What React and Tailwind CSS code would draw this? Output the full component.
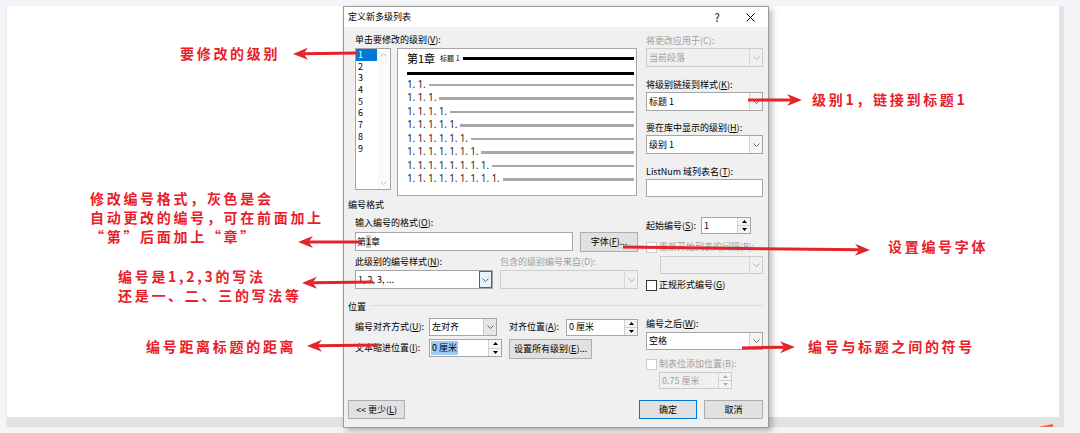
import React from 'react';

const UI = "[font-family:'Noto_Sans_CJK_SC','Noto_Sans',sans-serif]";
const LBL = 'h-[14px] leading-[14px] whitespace-nowrap';
const ANN =
  "absolute [font-family:'Noto_Sans_CJK_SC',sans-serif] text-[14px] font-bold text-[#e8202a] tracking-[2.7px] leading-[19px] whitespace-nowrap";

function Chevron({ color = '#6b6b6b', up = false }) {
  return (
    <svg width="7" height="4" viewBox="0 0 7 4">
      <polyline
        points={up ? '0.5,3.5 3.5,0.5 6.5,3.5' : '0.5,0.5 3.5,3.5 6.5,0.5'}
        fill="none"
        stroke={color}
        strokeWidth="1"
      />
    </svg>
  );
}

function Tri({ up, color = '#000' }) {
  return (
    <svg width="5" height="3" viewBox="0 0 5 3">
      <polygon points={up ? '0,3 2.5,0 5,3' : '0,0 5,0 2.5,3'} fill={color} />
    </svg>
  );
}

function Combo({ cls = '', text, disabled, focus, gray }) {
  return (
    <div
      className={`flex border ${
        disabled ? 'border-[#cccccc] bg-[#f0f0f0] text-[#a0a0a0]' : 'border-[#a6a6a6] bg-white'
      } ${cls}`}
    >
      <div className="flex-1 flex items-center pl-[2px] whitespace-nowrap overflow-hidden">{text}</div>
      <div
        className={`w-[13px] flex items-center justify-center ${
          focus
            ? 'border border-[#0078d7] bg-[#e5f1fb]'
            : gray
            ? 'border-l border-[#c8c8c8] bg-[#e6e6e6]'
            : disabled
            ? 'border-l border-[#d6d6d6]'
            : 'border-l border-[#d4d4d4] bg-[#f4f4f4]'
        }`}
      >
        <Chevron color={disabled ? '#b0b0b0' : '#6b6b6b'} />
      </div>
    </div>
  );
}

function Spin({ cls = '', text, disabled, selected }) {
  return (
    <div
      className={`flex border ${
        disabled ? 'border-[#cccccc] bg-[#f0f0f0] text-[#a0a0a0]' : 'border-[#a6a6a6] bg-white'
      } ${cls}`}
    >
      <div className="flex-1 flex items-center pl-[1px] whitespace-nowrap">
        {selected ? <span className="bg-[#9ccaf0] px-[1px]">{text}</span> : <span className="pl-[1px]">{text}</span>}
      </div>
      <div className="w-[13px] flex flex-col border-l border-[#d0d0d0]">
        <div className="flex-1 flex items-center justify-center border-b border-[#d0d0d0] bg-[#f4f4f4]">
          <Tri up color={disabled ? '#b0b0b0' : '#000'} />
        </div>
        <div className="flex-1 flex items-center justify-center bg-[#f4f4f4]">
          <Tri color={disabled ? '#b0b0b0' : '#000'} />
        </div>
      </div>
    </div>
  );
}

function Check({ cls = '', label, disabled }) {
  return (
    <div className={`flex items-center h-[12px] ${cls}`}>
      <div className={`w-[11px] h-[11px] border bg-white ${disabled ? 'border-[#cccccc]' : 'border-[#333333]'}`} />
      <span className={`ml-[2px] whitespace-nowrap ${disabled ? 'text-[#a0a0a0]' : ''}`}>{label}</span>
    </div>
  );
}

function Btn({ cls = '', children, primary }) {
  return (
    <div
      className={`flex items-center justify-center whitespace-nowrap bg-[#e1e1e1] border ${
        primary ? 'border-[#0078d7]' : 'border-[#adadad]'
      } ${cls}`}
    >
      {children}
    </div>
  );
}

function Arrow({ x1, y1, x2, y2 }) {
  const dx = x2 - x1;
  const dy = y2 - y1;
  const L = Math.hypot(dx, dy);
  const ux = dx / L;
  const uy = dy / L;
  const px = -uy;
  const py = ux;
  const len = 15;
  const hw = 6;
  const notch = 10.5;
  const bx = x2 - ux * len;
  const by = y2 - uy * len;
  const nx = x2 - ux * notch;
  const ny = y2 - uy * notch;
  const pts = `${x2},${y2} ${bx + px * hw},${by + py * hw} ${nx},${ny} ${bx - px * hw},${by - py * hw}`;
  return (
    <g>
      <line x1={x1} y1={y1} x2={nx} y2={ny} stroke="#e3242b" strokeWidth="3" />
      <polygon points={pts} fill="#e3242b" />
    </g>
  );
}

const levels = [1, 2, 3, 4, 5, 6, 7, 8, 9];
const rows = [2, 3, 4, 5, 6, 7, 8, 9].map((k) => Array(k).fill('1.').join(' '));

function ListBox() {
  return (
    <div className="w-[36px] h-[142px] bg-white border border-[#a6a6a6] flex">
      <div className="w-[21px] flex flex-col">
        {levels.map((n) => (
          <div
            key={n}
            className={`h-[11.7px] leading-[11.7px] pl-[2px] ${n === 1 ? 'bg-[#0078d7] text-white' : ''}`}
          >
            {n}
          </div>
        ))}
      </div>
      <div className="w-[13px] flex flex-col justify-between items-center py-[4px] bg-[#fafafa]">
        <Chevron up color="#c0c0c0" />
        <Chevron color="#c0c0c0" />
      </div>
    </div>
  );
}

function Preview() {
  return (
    <div className="ml-[6px] w-[240px] h-[148px] bg-white border border-[#a6a6a6] flex flex-col pl-[9px] pr-[2px]">
      <div className="mt-[2px] h-[14px] flex items-center">
        <span className="text-[11px] leading-none">第1章</span>
        <span className="ml-[5px] text-[7px] leading-none">标题 1</span>
        <div className="ml-[3px] flex-1 h-[3px] bg-black" />
      </div>
      <div className="mt-[7px] h-[3px] bg-black" />
      <div className="mt-[2px] flex flex-col">
        {rows.map((r) => (
          <div key={r} className="h-[13.5px] flex items-center">
            <span className="[font-family:'Noto_Sans',sans-serif] text-[10px] leading-none text-[#2a2a2a] whitespace-nowrap tracking-[-0.15px]">
              {r}
            </span>
            <div className="ml-[3px] mt-[2px] flex-1 h-[2.5px] bg-[#a8a8a8]" />
          </div>
        ))}
      </div>
    </div>
  );
}

function Dialog() {
  return (
    <div className="ml-[336px] w-[426px] h-[422px] border border-[#9b9b9b] bg-[#f0f0f0] shadow-[3px_3px_6px_rgba(0,0,0,0.28)] flex flex-col text-[9px] text-black">
      {/* title bar */}
      <div className="h-[20px] shrink-0 bg-white flex items-center pl-[4px]">
        <span className="text-[9px]">定义新多级列表</span>
        <span className="ml-auto w-[10px] text-center text-[11px] leading-none">?</span>
        <svg className="ml-[24px] mr-[13px]" width="9" height="9" viewBox="0 0 9 9">
          <line x1="0.5" y1="0.5" x2="8.5" y2="8.5" stroke="#000" strokeWidth="1" />
          <line x1="8.5" y1="0.5" x2="0.5" y2="8.5" stroke="#000" strokeWidth="1" />
        </svg>
      </div>

      {/* block 1 */}
      <div className="flex pl-[11px] h-[171px] shrink-0">
        <div className="w-[283px] flex flex-col">
          <div className={`mt-[6px] ${LBL}`}>
            单击要修改的级别(<u>V</u>):
          </div>
          <div className="mt-[1px] flex items-start">
            <ListBox />
            <Preview />
          </div>
        </div>
        <div className="ml-[8px] w-[117px] flex flex-col">
          <div className={`mt-[7px] ${LBL} text-[#a0a0a0]`}>将更改应用于(C):</div>
          <Combo cls="h-[19px]" text="当前段落" disabled />
          <div className={`mt-[11px] ${LBL}`}>
            将级别链接到样式(<u>K</u>):
          </div>
          <Combo cls="h-[19px]" text="标题 1" />
          <div className={`mt-[10px] ${LBL}`}>
            要在库中显示的级别(<u>H</u>):
          </div>
          <Combo cls="h-[19px]" text="级别 1" />
          <div className={`mt-[11px] ${LBL}`}>
            ListNum 域列表名(<u>T</u>):
          </div>
          <div className="h-[18px] bg-white border border-[#a6a6a6]" />
        </div>
      </div>

      {/* block 2 */}
      <div className={`pl-[4px] ${LBL} shrink-0`}>编号格式</div>
      <div className="flex pl-[11px] shrink-0">
        <div className="w-[283px] flex flex-col">
          <div className={`mt-[4px] ${LBL}`}>
            输入编号的格式(<u>O</u>):
          </div>
          <div className="mt-[2px] flex h-[20px] items-start">
            <div className="w-[218px] h-[19px] bg-white border border-[#a6a6a6] flex items-center pl-[1px]">
              第<span className="bg-[#c8c8c8]">1</span>章
            </div>
            <Btn cls="ml-[7px] w-[58px] h-[20px]">
              字体(<u>F</u>)...
            </Btn>
          </div>
          <div className="mt-[3px] flex">
            <div className={`w-[145px] ${LBL}`}>
              此级别的编号样式(<u>N</u>):
            </div>
            <div className={`${LBL} text-[#a0a0a0]`}>包含的级别编号来自(D):</div>
          </div>
          <div className="mt-[1px] flex">
            <Combo cls="w-[138px] h-[19px]" text="1, 2, 3, ..." focus />
            <Combo cls="ml-[7px] w-[138px] h-[19px]" text="" disabled />
          </div>
        </div>
        <div className="ml-[8px] w-[117px] flex flex-col">
          <div className="mt-[5px] flex items-center h-[17px]">
            <div className="w-[55px] whitespace-nowrap">
              起始编号(<u>S</u>):
            </div>
            <Spin cls="w-[50px] h-[17px]" text="1" />
          </div>
          <Check cls="mt-[7px]" label="重新开始列表的间隔(R):" disabled />
          <Combo cls="mt-[3px] ml-[14px] w-[103px] h-[18px]" text="" disabled />
          <Check
            cls="mt-[5px]"
            label={
              <>
                正规形式编号(<u>G</u>)
              </>
            }
          />
        </div>
      </div>

      {/* block 3 */}
      <div className={`mt-[9px] flex items-center pl-[4px] pr-[5px] ${LBL} shrink-0`}>
        <span>位置</span>
        <div className="ml-[4px] flex-1 h-px bg-[#dcdcdc] -mt-[3px]" />
      </div>
      <div className="flex pl-[11px] shrink-0">
        <div className="w-[283px] flex flex-col">
          <div className="mt-[4px] flex items-center h-[18px]">
            <div className="w-[74px] whitespace-nowrap">
              编号对齐方式(<u>U</u>):
            </div>
            <Combo cls="w-[68px] h-[18px]" text="左对齐" gray />
            <div className="ml-[12px] w-[57px] whitespace-nowrap">
              对齐位置(<u>A</u>):
            </div>
            <Spin cls="w-[72px] h-[17px]" text="0 厘米" />
          </div>
          <div className="mt-[3px] flex items-start h-[20px]">
            <div className="w-[74px] h-[18px] leading-[18px] whitespace-nowrap">
              文本缩进位置(<u>I</u>):
            </div>
            <Spin cls="w-[73px] h-[18px]" text="0 厘米" selected />
            <Btn cls="ml-[7px] w-[83px] h-[20px]">
              设置所有级别(<u>E</u>)...
            </Btn>
          </div>
        </div>
        <div className="ml-[8px] w-[117px] flex flex-col">
          <div className={`mt-[3px] ${LBL}`}>
            编号之后(<u>W</u>):
          </div>
          <Combo cls="mt-[1px] h-[18px]" text="空格" />
          <Check cls="mt-[8px]" label="制表位添加位置(B):" disabled />
          <Spin cls="mt-[2px] ml-[13px] w-[73px] h-[17px]" text="0.75 厘米" disabled />
        </div>
      </div>

      {/* footer */}
      <div className="mt-[11px] h-[19px] flex pl-[4px] pr-[5px] shrink-0">
        <Btn cls="w-[57px] h-[19px]">
          &lt;&lt; 更少(<u>L</u>)
        </Btn>
        <Btn cls="ml-auto w-[58px] h-[19px]" primary>
          确定
        </Btn>
        <Btn cls="ml-[7px] w-[59px] h-[19px]">取消</Btn>
      </div>
    </div>
  );
}

export default function App() {
  return (
    <div className={`relative w-[1080px] h-[433px] overflow-hidden bg-[#f4f5f9] pt-[6px] pl-[6px] ${UI}`}>
      <div className="w-[1058px] h-[421px] bg-white border-l border-l-[#e9e9ee] border-r-[5px] border-r-[#e3e3e3] border-b-[10px] border-b-[#e2e2e2]">
        <Dialog />
      </div>

      <svg className="absolute left-0 top-0 pointer-events-none" width="1080" height="433">
        <Arrow x1={357} y1={53} x2={293} y2={54} />
        <Arrow x1={362} y1={242} x2={298} y2={242} />
        <Arrow x1={373} y1={282} x2={302} y2={283} />
        <Arrow x1={378} y1={345} x2={307} y2={346} />
        <Arrow x1={748} y1={100} x2={802} y2={100} />
        <Arrow x1={623} y1={247} x2={870} y2={250} />
        <Arrow x1={742} y1={348} x2={795} y2={347} />
        <polygon points="1038,427 1053,424 1053,427" fill="#f26b2a" />
      </svg>

      <div className={`${ANN} left-[180px] top-[44px]`}>要修改的级别</div>
      <div className={`${ANN} left-[90px] top-[189px]`}>
        <div>修改编号格式，灰色是会</div>
        <div>自动更改的编号，可在前面加上</div>
        <div>“第”后面加上“章”</div>
      </div>
      <div className={`${ANN} left-[118px] top-[267px] leading-[18px]`}>
        <div>编号是1,2,3的写法</div>
        <div>还是一、二、三的写法等</div>
      </div>
      <div className={`${ANN} left-[146px] top-[337px]`}>编号距离标题的距离</div>
      <div className={`${ANN} left-[812px] top-[90px]`}>级别1，链接到标题1</div>
      <div className={`${ANN} left-[888px] top-[237px]`}>设置编号字体</div>
      <div className={`${ANN} left-[808px] top-[337px]`}>编号与标题之间的符号</div>
    </div>
  );
}
